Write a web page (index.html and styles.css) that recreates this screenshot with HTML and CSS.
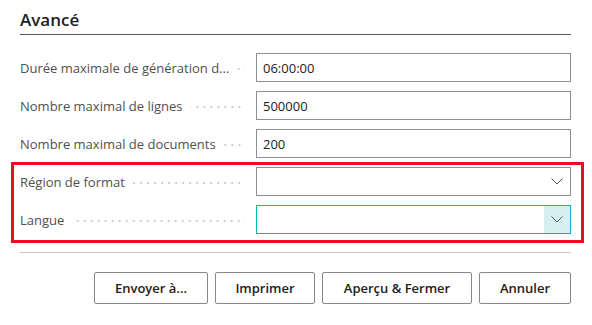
FILE: index.html
```html
<!DOCTYPE html>
<html lang="fr">
<head>
  <meta charset="UTF-8" />
  <title>Avancé</title>
  <link rel="stylesheet" href="styles.css">
</head>
<body>
  <div class="panel">
    <h2 class="section-title">Avancé</h2>

    <div class="fields">
      <div class="field">
        <label class="field-label"><span class="label-text">Durée maximale de génération d...</span><span class="leader"></span></label>
        <input class="field-input" type="text" value="06:00:00">
      </div>
      <div class="field">
        <label class="field-label"><span class="label-text">Nombre maximal de lignes</span><span class="leader"></span></label>
        <input class="field-input" type="text" value="500000">
      </div>
      <div class="field">
        <label class="field-label"><span class="label-text">Nombre maximal de documents</span><span class="leader"></span></label>
        <input class="field-input" type="text" value="200">
      </div>

      <div class="highlight">
        <div class="field">
          <label class="field-label"><span class="label-text">Région de format</span><span class="leader"></span></label>
          <div class="select">
            <span class="select-value"></span>
            <span class="select-arrow">
              <svg width="12" height="7" viewBox="0 0 12 7"><path d="M0.5 0.5 L6 6 L11.5 0.5" fill="none" stroke="#505a64" stroke-width="1"/></svg>
            </span>
          </div>
        </div>
        <div class="field">
          <label class="field-label"><span class="label-text">Langue</span><span class="leader"></span></label>
          <div class="select focused">
            <span class="select-value"></span>
            <span class="select-arrow">
              <svg width="12" height="7" viewBox="0 0 12 7"><path d="M0.5 0.5 L6 6 L11.5 0.5" fill="none" stroke="#505a64" stroke-width="1"/></svg>
            </span>
          </div>
        </div>
      </div>
    </div>

    <div class="footer">
      <button class="btn btn-send">Envoyer à...</button>
      <button class="btn btn-print">Imprimer</button>
      <button class="btn btn-preview">Aperçu &amp; Fermer</button>
      <button class="btn btn-cancel">Annuler</button>
    </div>
  </div>
</body>
</html>
```

FILE: styles.css
```css
body {
  margin: 0;
  background: #ffffff;
  font-family: "Open Sans", "Noto Sans", Arial, sans-serif;
  color: #212121;
}

.panel {
  padding: 8px 21px 0 20px;
}

.section-title {
  margin: 0;
  font-size: 17px;
  font-weight: 600;
  line-height: 23px;
  padding-bottom: 3px;
  border-bottom: 1px solid #505a64;
  color: #212121;
}

.fields {
  padding-top: 18px;
  display: flex;
  flex-direction: column;
  gap: 9px;
}

.field {
  display: flex;
  align-items: center;
  height: 29px;
}

.field-label {
  width: 225px;
  margin-right: 11px;
  display: flex;
  align-items: center;
  font-size: 13px;
  color: #505050;
  white-space: nowrap;
  overflow: hidden;
}

.leader {
  flex: 1;
  min-width: 4px;
  height: 2px;
  margin-left: 8px;
  margin-top: 2px;
  background-image: linear-gradient(to right, #cfcfcf 2px, transparent 2px);
  background-size: 7px 2px;
  background-repeat: repeat-x;
  background-position: right center;
}

.field-input {
  flex: 1;
  box-sizing: border-box;
  height: 29px;
  border: 1px solid #8a8f98;
  border-radius: 0;
  padding: 0 6px;
  font-family: inherit;
  font-size: 13px;
  color: #212121;
  outline: none;
}

.highlight {
  position: relative;
  display: flex;
  flex-direction: column;
  gap: 9px;
}

.highlight::after {
  content: "";
  position: absolute;
  top: -5px;
  bottom: -9px;
  left: -9px;
  right: -13px;
  border: 3px solid #e81123;
  pointer-events: none;
}

.select {
  flex: 1;
  box-sizing: border-box;
  height: 29px;
  border: 1px solid #8a8f98;
  display: flex;
}

.select-value {
  flex: 1;
}

.select-arrow {
  width: 26px;
  display: flex;
  align-items: center;
  justify-content: center;
}

.select.focused {
  border-color: #00b7c3;
}

.select.focused .select-arrow {
  background: #d6eff1;
}

.footer {
  margin-top: 18px;
  border-top: 1px solid #c8c8c8;
  padding-top: 19px;
  display: flex;
  justify-content: flex-end;
  gap: 7px;
}

.btn {
  height: 32px;
  padding: 0;
  white-space: nowrap;
  background: #ffffff;
  border: 1px solid #8a8886;
  border-radius: 2px;
  font-family: inherit;
  font-size: 13px;
  font-weight: 600;
  color: #212121;
}

.btn-send { width: 114px; }
.btn-print { width: 100px; }
.btn-preview { width: 150px; }
.btn-cancel { width: 92px; }
```
